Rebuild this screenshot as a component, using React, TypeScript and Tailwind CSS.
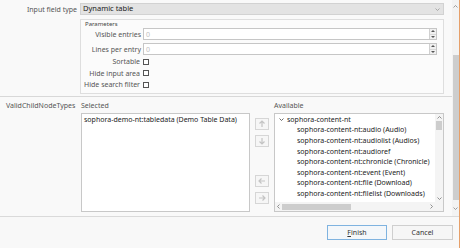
import React from "react";

const ChevUp = ({ c = "#8a8a8a" }: { c?: string }) => (
  <svg width="5" height="3" viewBox="0 0 5 3"><path d="M0.5 2.5 L2.5 0.5 L4.5 2.5" fill="none" stroke={c} strokeWidth="0.8" /></svg>
);
const ChevDown = ({ c = "#8a8a8a" }: { c?: string }) => (
  <svg width="5" height="3" viewBox="0 0 5 3"><path d="M0.5 0.5 L2.5 2.5 L4.5 0.5" fill="none" stroke={c} strokeWidth="0.8" /></svg>
);
const ChevLeft = ({ c = "#8a8a8a" }: { c?: string }) => (
  <svg width="3" height="5" viewBox="0 0 3 5"><path d="M2.5 0.5 L0.5 2.5 L2.5 4.5" fill="none" stroke={c} strokeWidth="0.8" /></svg>
);
const ChevRight = ({ c = "#8a8a8a" }: { c?: string }) => (
  <svg width="3" height="5" viewBox="0 0 3 5"><path d="M0.5 0.5 L2.5 2.5 L0.5 4.5" fill="none" stroke={c} strokeWidth="0.8" /></svg>
);

const Arrow = ({ dir }: { dir: "up" | "down" | "left" | "right" }) => {
  const paths: Record<string, string> = {
    up: "M4 7 V1 M1.5 3.5 L4 1 L6.5 3.5",
    down: "M4 1 V7 M1.5 4.5 L4 7 L6.5 4.5",
    left: "M7 4 H1 M3.5 1.5 L1 4 L3.5 6.5",
    right: "M1 4 H7 M4.5 1.5 L7 4 L4.5 6.5",
  };
  return (
    <svg width="8" height="8" viewBox="0 0 8 8">
      <path d={paths[dir]} fill="none" stroke="#c4c4c4" strokeWidth="1.2" />
    </svg>
  );
};

const Spinner = () => (
  <div className="w-[7px] h-full border-l border-[#d0d0d0] bg-[#f0f0f0] flex flex-col">
    <div className="flex-1 flex items-center justify-center border-b border-[#d8d8d8]">
      <svg width="4" height="2" viewBox="0 0 4 2"><path d="M0 2 L2 0 L4 2 Z" fill="#555" /></svg>
    </div>
    <div className="flex-1 flex items-center justify-center">
      <svg width="4" height="2" viewBox="0 0 4 2"><path d="M0 0 L2 2 L4 0 Z" fill="#555" /></svg>
    </div>
  </div>
);

const NumField = ({ label }: { label: string }) => (
  <div className="flex items-center h-[12px]">
    <div className="w-[62px] text-right text-[#555] pr-[2px] whitespace-nowrap">{label}</div>
    <div className="w-[294px] h-[12px] bg-white border border-[#c6c6c6] flex items-center justify-between">
      <span className="pl-[2px] text-[#c0c0c0]">0</span>
      <Spinner />
    </div>
  </div>
);

const Check = ({ label }: { label: string }) => (
  <div className="flex items-center h-[11.5px]">
    <div className="w-[62px] text-right text-[#555] pr-[3px] whitespace-nowrap">{label}</div>
    <div className="w-[6px] h-[6px] border border-[#555] bg-white" />
  </div>
);

const items = [
  "sophora-content-nt:audio (Audio)",
  "sophora-content-nt:audiolist (Audios)",
  "sophora-content-nt:audioref",
  "sophora-content-nt:chronicle (Chronicle)",
  "sophora-content-nt:event (Event)",
  "sophora-content-nt:file (Download)",
  "sophora-content-nt:filelist (Downloads)",
  "sophora-content-nt:fileref",
];

const SideBtn = ({ dir }: { dir: "up" | "down" | "left" | "right" }) => (
  <div className="w-[14px] h-[12px] border border-[#d6d6d6] bg-[#f6f6f6] flex items-center justify-center">
    <Arrow dir={dir} />
  </div>
);

export default function App() {
  return (
    <div className="w-[460px] h-[248px] bg-[#f9f9f9] flex flex-col border-r border-[#e6a06a] font-['Noto_Sans',sans-serif] text-[7px] leading-none text-[#333] overflow-hidden">
      <div className="flex h-[216px]">
        <div className="flex-1 flex flex-col">
          <div className="flex items-center mt-[3px] h-[12px]">
            <div className="w-[80px] text-right pr-[3px] text-[#555] whitespace-nowrap">Input field type</div>
            <div className="w-[364px] h-[12px] bg-[#e3e3e3] border border-[#d2d2d2] flex items-center justify-between pl-[2px] pr-[3px]">
              <span className="text-[#222] text-[7.5px]">Dynamic table</span>
              <ChevDown c="#999" />
            </div>
          </div>
          <div className="ml-[80px] mt-[4px] w-[364px] h-[75px] border border-[#dedede] bg-[#fbfbfb] flex flex-col">
            <div className="pl-[4px] h-[8px] flex items-center text-[6px] text-[#444]">Parameters</div>
            <div className="flex flex-col gap-[3px]">
              <NumField label="Visible entries" />
              <NumField label="Lines per entry" />
            </div>
            <div className="flex flex-col mt-[1px]">
              <Check label="Sortable" />
              <Check label="Hide input area" />
              <Check label="Hide search filter" />
            </div>
          </div>
          <div className="h-px bg-[#d8d8d8] mt-[2px]" />
          <div className="flex">
            <div className="w-[81px] pl-[6px] text-[#555] h-[16px] flex items-center whitespace-nowrap">ValidChildNodeTypes</div>
            <div className="w-[169px] flex flex-col">
              <div className="h-[16px] flex items-center text-[#555]">Selected</div>
              <div className="h-[99px] bg-white border border-[#c8c8c8] px-[2px] pt-[2px] text-[#222] whitespace-nowrap">
                sophora-demo-nt:tabledata (Demo Table Data)
              </div>
            </div>
            <div className="w-[14px] ml-[5px] flex flex-col pt-[21px]">
              <SideBtn dir="up" />
              <div className="mt-[5px]"><SideBtn dir="down" /></div>
              <div className="mt-[28px]"><SideBtn dir="left" /></div>
              <div className="mt-[5px]"><SideBtn dir="right" /></div>
            </div>
            <div className="w-[170px] ml-[5px] flex flex-col">
              <div className="h-[16px] flex items-center text-[#555]">Available</div>
              <div className="h-[99px] bg-white border border-[#c8c8c8] flex flex-col">
                <div className="flex flex-1 min-h-0">
                  <div className="flex-1 overflow-hidden text-[#222] whitespace-nowrap">
                    <div className="h-[10.6px] flex items-center pl-[4px]">
                      <ChevDown c="#444" />
                      <span className="ml-[3px]">sophora-content-nt</span>
                    </div>
                    {items.map((t) => (
                      <div key={t} className="h-[10.6px] flex items-center pl-[22px]">{t}</div>
                    ))}
                  </div>
                  <div className="w-[8px] bg-[#f4f4f4] flex flex-col items-center">
                    <div className="h-[7px] flex items-center"><ChevUp c="#777" /></div>
                    <div className="w-[6px] h-[9px] bg-[#cdcdcd]" />
                    <div className="flex-1" />
                    <div className="h-[7px] flex items-center"><ChevDown c="#777" /></div>
                  </div>
                </div>
                <div className="h-[9px] flex">
                  <div className="flex-1 bg-[#f4f4f4] flex items-center">
                    <div className="w-[7px] flex justify-center"><ChevLeft c="#777" /></div>
                    <div className="w-[69px] h-[6px] bg-[#cdcdcd]" />
                    <div className="flex-1" />
                    <div className="w-[7px] flex justify-center"><ChevRight c="#777" /></div>
                  </div>
                  <div className="w-[8px] bg-[#f4f4f4]" />
                </div>
              </div>
            </div>
          </div>
        </div>
        <div className="w-[7px] bg-[#f3f3f3] flex flex-col items-center">
          <div className="h-[12px] flex items-center"><ChevUp c="#888" /></div>
          <div className="h-[43px]" />
          <div className="w-[6px] h-[145px] bg-[#cdcdcd]" />
          <div className="flex-1 flex items-center"><ChevDown c="#888" /></div>
        </div>
      </div>
      <div className="h-px bg-[#dadada]" />
      <div className="flex-1 bg-[#f8f8f8] flex justify-end items-start pt-[8px] pr-[6px] gap-[5px]">
        <div className="w-[60px] h-[15px] border border-[#7fb3e0] bg-[#f4f7fa] flex items-center justify-center text-[#333]">
          <span><span className="underline">F</span>inish</span>
        </div>
        <div className="w-[61px] h-[15px] border border-[#cfcfcf] bg-[#f6f6f6] flex items-center justify-center text-[#333]">
          Cancel
        </div>
      </div>
    </div>
  );
}
